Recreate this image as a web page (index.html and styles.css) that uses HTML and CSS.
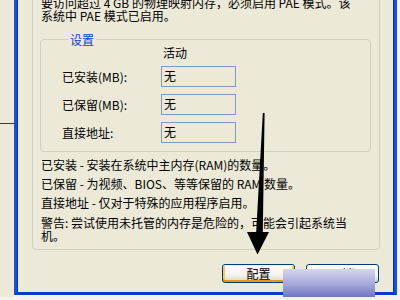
FILE: index.html
```html
<!DOCTYPE html>
<html lang="zh-CN">
<head>
<meta charset="utf-8">
<title>PAE 设置</title>
<link rel="stylesheet" href="styles.css">
</head>
<body>
<div class="screen">
  <div class="left-strip"></div>
  <div class="window">
    <div class="panel">
      <p class="intro">要访问超过 4 GB 的物理映射内存，必须启用 PAE 模式。该<br>系统中 PAE 模式已启用。</p>
      <fieldset class="group">
        <legend class="group-title">设置</legend>
        <div class="grid">
          <span></span><span class="col-head">活动</span>
          <span class="label">已安装(MB):</span><span class="field">无</span>
          <span class="label">已保留(MB):</span><span class="field">无</span>
          <span class="label">直接地址:</span><span class="field">无</span>
        </div>
      </fieldset>
      <div class="desc">
        <p>已安装 - 安装在系统中主内存(RAM)的数量。</p>
        <p>已保留 - 为视频、BIOS、等等保留的 RAM 数量。</p>
        <p>直接地址 - 仅对于特殊的应用程序启用。</p>
      </div>
      <p class="warn">警告: 尝试使用未托管的内存是危险的，可能会引起系统当<br>机。</p>
    </div>
    <div class="buttons">
      <button class="btn default">配置</button>
      <button class="btn">取消</button>
    </div>
  </div>
  <div class="overlay"></div>
  <svg class="arrow" width="400" height="300" viewBox="0 0 400 300">
    <polygon points="262.8,113 264.6,113 262.8,232 269,232 257.5,254.5 247,232 256.2,232" fill="#000"/>
  </svg>
</div>
</body>
</html>
```
FILE: styles.css
```css
html, body {
  margin: 0;
  padding: 0;
}
body {
  font-family: "Noto Sans CJK SC", "Noto Sans", sans-serif;
  font-size: 12px;
  color: #000;
}
.screen {
  position: relative;
  width: 400px;
  height: 300px;
  overflow: hidden;
  display: flex;
  align-items: flex-start;
  background: #f3f2ee;
}
.left-strip {
  width: 14px;
  height: 297px;
  flex: none;
  background:
    linear-gradient(#3a3a3a, #3a3a3a) 0 123px / 14px 1px no-repeat,
    #ece9d8;
}
.window {
  width: 383px;
  height: 295px;
  flex: none;
  box-sizing: border-box;
  background: #ece9d8;
  border-left: 3px solid #1a4ed6;
  border-right: 3px solid #1a4ed6;
  border-bottom: 3px solid #0d3bc0;
  box-shadow: inset 1px 0 0 #0a2fa8, inset -1px 0 0 #0a2fa8;
  display: flex;
  flex-direction: column;
  padding: 0 14px 0 15px;
}
.panel {
  margin-top: -10px;
  border: 1px solid #d0cfbf;
  border-radius: 0 0 4px 4px;
  padding: 5px 8px 7px 8px;
}
p {
  margin: 0;
}
.intro {
  line-height: 13px;
}
.group {
  margin: 11px 0 0 -1px;
  padding: 0 0 8px 21px;
  border: 1px solid #d0d0bf;
  border-radius: 4px;
  min-width: 0;
}
.group-title {
  margin-left: 6px;
  padding: 0 2px;
  color: #0046d5;
  line-height: 13px;
}
.grid {
  display: grid;
  grid-template-columns: 99px 75px;
  row-gap: 7px;
  align-items: center;
}
.col-head {
  padding-left: 2px;
  line-height: 13px;
  margin-top: 0;
  margin-bottom: 0;
}
.label {
  line-height: 13px;
}
.field {
  box-sizing: border-box;
  height: 21px;
  border: 1px solid #7f9db9;
  padding: 0 2px;
  line-height: 18px;
  background: #ece9d8;
}
.desc {
  margin-top: 3px;
}
.desc p {
  line-height: 19px;
}
.warn {
  margin-top: 4px;
  line-height: 13px;
}
.buttons {
  display: flex;
  justify-content: flex-end;
  gap: 11px;
  margin-top: 14px;
  padding-right: 1px;
}
.btn {
  width: 73px;
  height: 19px;
  box-sizing: border-box;
  border: 1px solid #003c74;
  border-radius: 3px;
  background: linear-gradient(#ffffff, #f3f2ec 60%, #d9d5c8);
  font-family: "Noto Sans CJK SC", "Noto Sans", sans-serif;
  font-size: 12px;
  line-height: 15px;
  padding: 0;
  color: #000;
}
.btn.default {
  box-shadow: inset 0 1px 0 #fff0cf, inset 0 -2px 0 #e5970f, inset 2px 0 0 #f8c65a, inset -2px 0 0 #f8c65a;
}
.overlay {
  position: absolute;
  left: 283px;
  top: 269px;
  width: 92px;
  height: 28px;
  background: linear-gradient(#d4d6ee, #a3a8d8 55%, #6f76c2);
}
.arrow {
  position: absolute;
  left: 0;
  top: 0;
}
```
